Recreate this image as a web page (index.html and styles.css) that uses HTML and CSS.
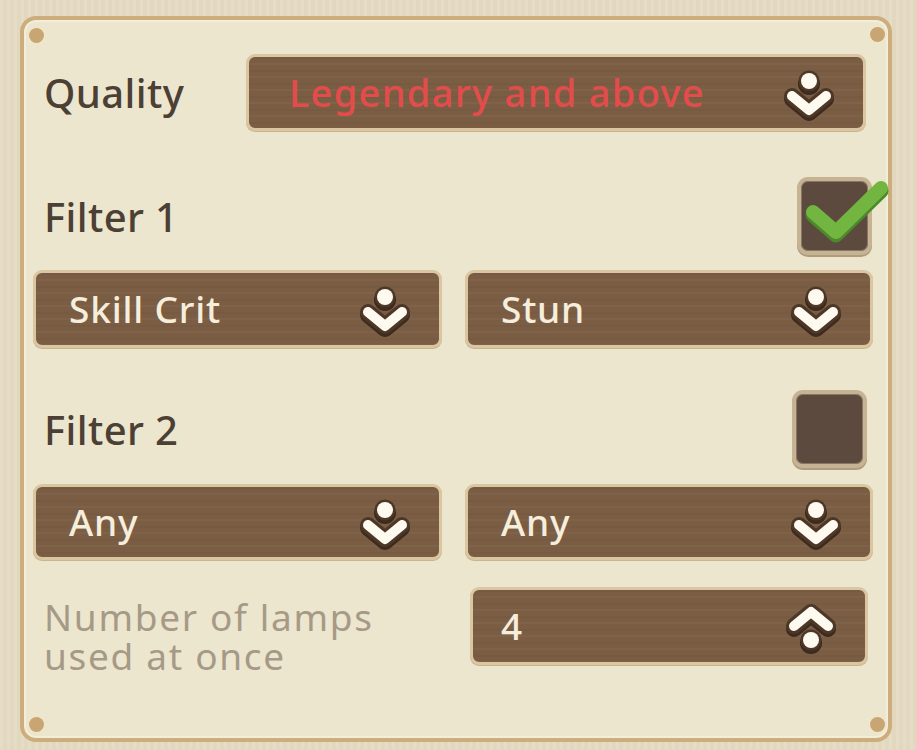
FILE: index.html
```html
<!DOCTYPE html>
<html>
<head>
	<title>Auto Lamp Settings</title>
	<meta charset="utf-8">
	<meta name="viewport" content="width=device-width, initial-scale=1">
	<link rel="stylesheet" href="styles.css">
</head>
<body>
	<div class="panel">
		<span class="dot dot-tl"></span>
		<span class="dot dot-tr"></span>
		<span class="dot dot-bl"></span>
		<span class="dot dot-br"></span>

		<div class="quality-row">
			<div class="label">Quality</div>
			<div class="select select-quality">
				<span class="value red">Legendary and above</span>
				<svg class="arrow" viewBox="0 0 56 52"><use href="#down"/></svg>
			</div>
		</div>

		<div class="filter-head head-1">
			<div class="label">Filter 1</div>
			<div class="checkbox checked">
				<svg class="tick" viewBox="0 0 90 70">
					<path d="M10 36 L33 56 L78 12" fill="none" stroke="#4b8a2a" stroke-width="15" stroke-linecap="round" stroke-linejoin="round" transform="translate(0 3)"/>
					<path d="M10 36 L33 56 L78 12" fill="none" stroke="#72b541" stroke-width="14" stroke-linecap="round" stroke-linejoin="round"/>
				</svg>
			</div>
		</div>
		<div class="select-row row-1">
			<div class="select"><span class="value">Skill Crit</span><svg class="arrow" viewBox="0 0 56 52"><use href="#down"/></svg></div>
			<div class="select"><span class="value">Stun</span><svg class="arrow" viewBox="0 0 56 52"><use href="#down"/></svg></div>
		</div>

		<div class="filter-head head-2">
			<div class="label">Filter 2</div>
			<div class="checkbox"></div>
		</div>
		<div class="select-row row-2">
			<div class="select"><span class="value">Any</span><svg class="arrow" viewBox="0 0 56 52"><use href="#down"/></svg></div>
			<div class="select"><span class="value">Any</span><svg class="arrow" viewBox="0 0 56 52"><use href="#down"/></svg></div>
		</div>

		<div class="lamps-row">
			<div class="lamps-label">
				<div>Number of lamps</div>
				<div>used at once</div>
			</div>
			<div class="select select-lamps">
				<span class="value">4</span>
				<svg class="arrow" viewBox="0 0 56 52"><use href="#up"/></svg>
			</div>
		</div>
	</div>

	<!-- chevron + dot arrows shared by the dropdowns -->
	<svg class="defs" width="0" height="0">
		<defs>
			<g id="down">
				<g transform="translate(0 3)" fill="#3d2b1e" stroke="#3d2b1e">
					<circle cx="28" cy="11" r="11" stroke="none"/>
					<path d="M11 26 L28 40 L45 26" fill="none" stroke-width="16" stroke-linecap="round" stroke-linejoin="round"/>
				</g>
				<g fill="#4d3828" stroke="#4d3828">
					<circle cx="28" cy="11" r="10.5" stroke="none"/>
					<path d="M11 26 L28 40 L45 26" fill="none" stroke-width="16" stroke-linecap="round" stroke-linejoin="round"/>
				</g>
				<circle cx="28" cy="11" r="8" fill="#fffaf0"/>
				<path d="M11 26 L28 40 L45 26" fill="none" stroke="#fffaf0" stroke-width="10" stroke-linecap="round" stroke-linejoin="round"/>
			</g>
			<g id="up">
				<g transform="translate(0 3)" fill="#3d2b1e" stroke="#3d2b1e">
					<circle cx="28" cy="37" r="11" stroke="none"/>
					<path d="M11 23 L28 9 L45 23" fill="none" stroke-width="16" stroke-linecap="round" stroke-linejoin="round"/>
				</g>
				<g fill="#4d3828" stroke="#4d3828">
					<circle cx="28" cy="37" r="10.5" stroke="none"/>
					<path d="M11 23 L28 9 L45 23" fill="none" stroke-width="16" stroke-linecap="round" stroke-linejoin="round"/>
				</g>
				<circle cx="28" cy="37" r="8" fill="#fffaf0"/>
				<path d="M11 23 L28 9 L45 23" fill="none" stroke="#fffaf0" stroke-width="10" stroke-linecap="round" stroke-linejoin="round"/>
			</g>
		</defs>
	</svg>
</body>
</html>
```

FILE: styles.css
```css
* {
	box-sizing: border-box;
}

body {
	margin: 0;
	width: 916px;
	height: 750px;
	overflow: hidden;
	padding: 16px 0 0 20px;
	font-family: "Noto Sans", "Open Sans", sans-serif;
	background:
		repeating-linear-gradient(90deg, rgba(255,255,255,0.12) 0 3px, transparent 3px 7px),
		#e2d8bf;
}

.defs {
	position: absolute;
}

.panel {
	position: relative;
	width: 872px;
	height: 726px;
	border: 4px solid #ccad7b;
	border-radius: 16px;
	background: #ece6cf;
	box-shadow: inset 0 0 0 2px #f3eedb;
	display: flex;
	flex-direction: column;
}

.dot {
	position: absolute;
	width: 15px;
	height: 15px;
	border-radius: 50%;
	background: #c8a673;
	box-shadow: 0 0 0 2px #efe6cc;
}

.dot-tl { left: 5px; top: 8px; }
.dot-tr { right: 3px; top: 7px; }
.dot-bl { left: 5px; bottom: 6px; }
.dot-br { right: 3px; bottom: 6px; }

.label {
	font-size: 40px;
	font-weight: 500;
	color: #4b4033;
	letter-spacing: 0.4px;
	padding-left: 20px;
}

.quality-row {
	margin-top: 34px;
	height: 77px;
	display: flex;
	align-items: center;
}

.select {
	position: relative;
	height: 100%;
	display: flex;
	align-items: center;
	justify-content: space-between;
	padding: 0 26px 0 33px;
	border: 3px solid #dac6a0;
	border-radius: 9px;
	background:
		repeating-linear-gradient(180deg, rgba(0,0,0,0.035) 0 2px, transparent 2px 6px, rgba(255,255,255,0.03) 6px 8px, transparent 8px 13px),
		#7b5d44;
	box-shadow: 0 1px 0 #c9b48d;
}

.value {
	font-size: 37px;
	font-weight: 500;
	letter-spacing: 0.8px;
	color: #f6eedd;
	padding-bottom: 2px;
}

.value.red {
	font-size: 38px;
	letter-spacing: 1.3px;
	color: #e44c4c;
}

.arrow {
	width: 56px;
	height: 52px;
	margin-top: 6px;
}

.select-quality {
	margin-left: auto;
	margin-right: 22px;
	width: 620px;
	padding-left: 40px;
}

.filter-head {
	display: flex;
	align-items: center;
	justify-content: space-between;
}

.head-1 {
	margin-top: 46px;
	padding-right: 16px;
}

.head-2 {
	margin-top: 42px;
	padding-right: 21px;
}

.checkbox {
	position: relative;
	width: 75px;
	height: 78px;
	border: 4px solid #c6b394;
	border-radius: 11px;
	background: #5b4a3d;
	box-shadow: inset 0 0 0 1px #8a7763, 0 2px 0 #b09c7c;
}

.tick {
	position: absolute;
	left: 2px;
	top: -5px;
	width: 90px;
	height: 70px;
}

.select-row {
	display: grid;
	grid-template-columns: 409px 408px;
	gap: 23px;
	padding-left: 9px;
}

.row-1 {
	margin-top: 15px;
	height: 78px;
}

.row-2 {
	margin-top: 16px;
	height: 76px;
}

.lamps-row {
	margin-top: 27px;
	display: flex;
	align-items: flex-start;
	justify-content: space-between;
	padding-right: 20px;
}

.lamps-label {
	padding: 10px 0 0 20px;
	font-size: 37px;
	line-height: 39px;
	letter-spacing: 1.7px;
	color: #a69a87;
}

.select-lamps {
	width: 398px;
	height: 78px;
	padding-left: 28px;
}
```
